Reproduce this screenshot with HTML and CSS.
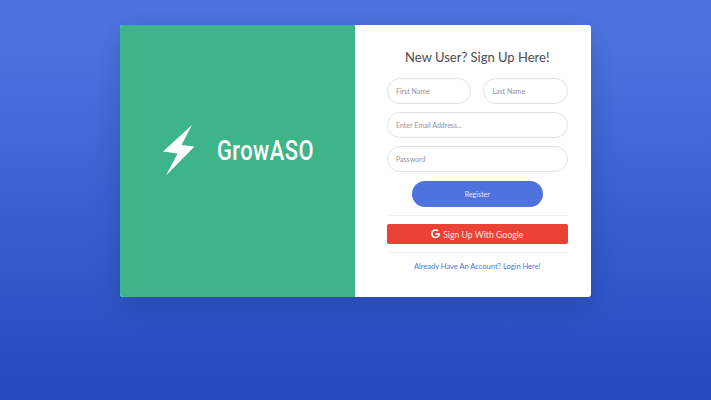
FILE: index.html
```html
<!DOCTYPE html>
<html lang="en">
<head>
<meta charset="utf-8">
<title>GrowASO - Register</title>
<link rel="stylesheet" href="styles.css">
</head>
<body>
<main class="card">
  <section class="brand">
    <svg class="bolt" viewBox="0 0 32 51" aria-hidden="true"><path d="M29 0 0 26.500l14.500 2L3 50.500l28.500-29L18.500 20z"/></svg>
    <span class="brand-name">GrowASO</span>
  </section>
  <section class="panel">
    <h1 class="title">New User? Sign Up Here!</h1>
    <form class="form">
      <div class="name-row">
        <input class="field" type="text" placeholder="First Name">
        <input class="field" type="text" placeholder="Last Name">
      </div>
      <input class="field" type="email" placeholder="Enter Email Address...">
      <input class="field" type="password" placeholder="Password">
      <button class="register" type="button">Register</button>
    </form>
    <hr class="rule rule-top">
    <a class="google" href="#">
      <svg class="g-icon" viewBox="0 0 488 512" aria-hidden="true"><path d="M488 261.800C488 403.300 391.100 504 248 504 110.800 504 0 393.200 0 256S110.800 8 248 8c66.800 0 123 24.500 166.300 64.900l-67.500 64.900C258.500 52.600 94.300 116.600 94.300 256c0 86.500 69.100 156.600 153.700 156.600 98.200 0 135-70.400 140.800-106.900H248v-85.300h236.100c2.300 12.700 3.900 24.900 3.900 41.400z"/></svg>
      Sign Up With Google
    </a>
    <hr class="rule rule-bottom">
    <a class="login" href="#">Already Have An Account? Login Here!</a>
  </section>
</main>
</body>
</html>
```

FILE: styles.css
```css
* { box-sizing: border-box; }
html, body { height: 100%; }
body {
  margin: 0;
  padding-top: 25px;
  overflow: hidden;
  background: linear-gradient(180deg, #4e73df 10%, #224abe 100%);
  font-family: Lato, "Noto Sans", sans-serif;
}
.card {
  display: flex;
  width: 471px;
  height: 272px;
  margin: 0 auto;
  background: #fff;
  border-radius: 3px;
  overflow: hidden;
  box-shadow: 0 8px 28px rgba(20, 30, 70, .22);
}
.brand {
  display: flex;
  flex: 0 0 235px;
  align-items: center;
  gap: 22px;
  padding: 0 0 21px 43px;
  background: #3eb489;
}
.bolt { width: 32px; height: 51px; fill: #fff; flex: none; }
.brand-name {
  color: #fff;
  font-family: Roboto, "Liberation Sans", sans-serif;
  font-weight: 500;
  font-size: 28px;
  line-height: 1;
  letter-spacing: .6px;
  transform: scaleX(.78);
  transform-origin: left center;
}
.panel {
  display: flex;
  flex: 1;
  flex-direction: column;
  align-items: center;
  padding: 22px 23px 0 31.500px;
}
.title {
  margin: 0 0 11px;
  color: #4a4b55;
  font-size: 13px;
  font-weight: 400;
  line-height: 20px;
  white-space: nowrap;
}
.form {
  display: flex;
  flex-direction: column;
  align-items: center;
  gap: 8px;
  width: 100%;
}
.name-row {
  display: grid;
  grid-template-columns: 84.500px 1fr;
  gap: 12px;
  width: 100%;
}
.field {
  display: block;
  width: 100%;
  min-width: 0;
  height: 26px;
  padding: 0 8.500px;
  border: 1px solid #e0e1e8;
  border-radius: 13px;
  outline: 0;
  background: #fff;
  color: #6e707e;
  font: 400 7px Lato, sans-serif;
}
.field::placeholder { color: #92939f; opacity: 1; }
.register {
  width: 131px;
  height: 26px;
  margin-top: 1px;
  border: 0;
  border-radius: 13px;
  background: #4e73df;
  color: #e4e9fa;
  font: 400 7px Lato, sans-serif;
}
.rule {
  width: 100%;
  margin: 0;
  border: 0;
  border-top: 1px solid #eeeef1;
}
.rule-top { margin: 8px 0; }
.rule-bottom { margin: 8px 0 0; }
.google {
  display: flex;
  align-items: center;
  justify-content: center;
  gap: 3px;
  width: 181px;
  height: 20px;
  border-radius: 2px;
  background: #ea4335;
  color: #fbe2df;
  font-size: 8.700px;
  text-decoration: none;
}
.g-icon { width: 9px; height: 9.500px; fill: #fff; flex: none; }
.login {
  margin-top: 9px;
  color: #4e73df;
  font-size: 7.500px;
  line-height: 10px;
  text-decoration: none;
  white-space: nowrap;
}
```
